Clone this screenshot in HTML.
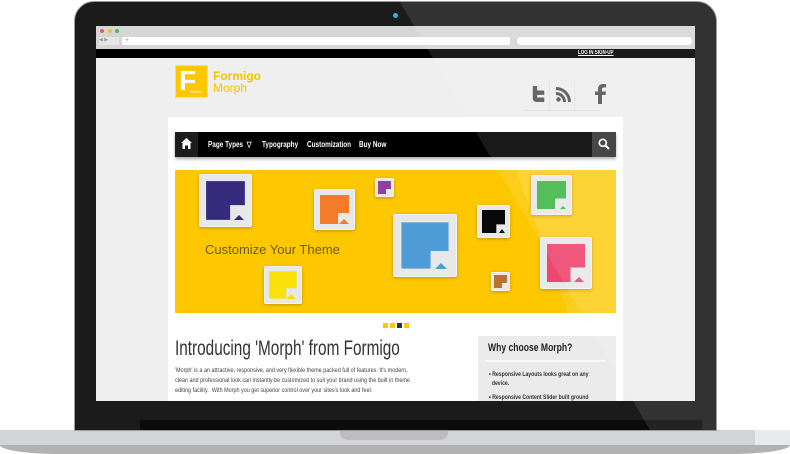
<!DOCTYPE html>
<html><head><meta charset="utf-8"><style>
*{margin:0;padding:0;box-sizing:border-box}
body{width:790px;height:454px;background:#fff;position:relative;overflow:hidden;font-family:"Liberation Sans",sans-serif}
.a{position:absolute}
.sq{transform-origin:0 0;white-space:nowrap}
.tile{position:absolute;background:#e8e8e8;border:1px solid #f4f4f4;box-shadow:0 1px 3px rgba(0,0,0,.25);border-radius:2px}
.tile i{position:absolute;left:12%;top:12%;width:76%;height:76%;display:block;clip-path:polygon(0 0,100% 0,100% 62%,62% 62%,62% 100%,0 100%)}
.tile b{position:absolute;right:14%;bottom:12%;width:0;height:0;border-left:5px solid transparent;border-right:5px solid transparent;border-bottom:5px solid}
.nav span{position:absolute;top:0;transform-origin:0 0;transform:scaleX(.8);white-space:nowrap}
</style></head><body>
<div class="a" style="left:0;top:430px;width:790px;height:16px;background:#d3d4d6"></div>
<div class="a" style="left:755px;top:430px;width:35px;height:16px;background:#e8eaee"></div>
<div class="a" style="left:0;top:445px;width:790px;height:9px;background:#b2b2b3;border-radius:0 0 60px 60px/0 0 9px 9px"></div>
<div class="a" style="left:340px;top:430px;width:108px;height:10px;background:#bdbdbf;border-radius:0 0 8px 8px"></div>
<div class="a" style="left:74px;top:1px;width:643px;height:430px;background:#1b1b1b;border:1px solid #9a9a9a;border-radius:20px 20px 0 0"></div>
<div class="a" style="left:140px;top:420px;width:562px;height:10px;background:#0b0b0b"></div>
<div class="a" style="left:393px;top:13px;width:5px;height:5px;border-radius:50%;background:#2ab8e6"></div>
<div class="a" style="left:96px;top:26px;width:599px;height:375px;background:#efefef;overflow:hidden">
 <div class="a" style="left:0;top:0;width:599px;height:23px;background:#d6d6d6"></div>
 <div class="a" style="left:4px;top:3px;width:4px;height:4px;border-radius:50%;background:#ec5f58"></div>
 <div class="a" style="left:12px;top:3px;width:4px;height:4px;border-radius:50%;background:#f2bb3c"></div>
 <div class="a" style="left:19px;top:3px;width:4px;height:4px;border-radius:50%;background:#3fc34e"></div>
 <div class="a" style="left:3px;top:11px;width:20px;height:8px;background:#e6e6e6;font-size:5px;color:#999">◀ ▶</div>
 <div class="a" style="left:26px;top:11px;width:388px;height:8px;background:#fff;border-radius:2px;font-size:7px;line-height:8px;color:#999;padding-left:3px">+</div>
 <div class="a" style="left:421px;top:11px;width:175px;height:8px;background:#fff;border-radius:4px"></div>
 <div class="a" style="left:0;top:23px;width:599px;height:9px;background:#000"></div>
 <div class="a sq" style="left:482px;top:23px;font-size:6px;line-height:9px;color:#fff;font-weight:bold;text-decoration:underline;transform:scaleX(.75)">LOG IN SIGN-UP</div>
 <div class="a" style="left:79px;top:39px;width:33px;height:33px;background:#fdc800;border:1px solid #fde070"></div>
 <div class="a" style="left:83px;top:40px;font-size:28px;font-weight:bold;color:#fff;line-height:30px">F</div>
 <div class="a" style="left:93px;top:63px;font-size:4px;color:#fff">Theme</div>
 <div class="a" style="left:117px;top:44px;font-size:12px;font-weight:bold;color:#f5c200;line-height:12px">Formigo</div>
 <div class="a" style="left:117px;top:56px;font-size:12px;color:#f5c200;line-height:12px">Morph</div>
 <div class="a" style="left:428px;top:53px;width:75px;height:32px;border-bottom:1px solid #e4e4e4"></div>
 <div class="a" style="left:453px;top:53px;width:1px;height:32px;background:#e4e4e4"></div>
 <div class="a" style="left:478px;top:53px;width:1px;height:32px;background:#e4e4e4"></div>
 <svg class="a" style="left:435px;top:59px" width="15" height="18" viewBox="0 0 17 18"><path d="M2 0h5v5h8v5H7v3h8v5H6a4 4 0 0 1-4-4z" fill="#555"/></svg>
 <svg class="a" style="left:460px;top:61px" width="15" height="15" viewBox="0 0 15 15"><circle cx="2.5" cy="12.5" r="2.2" fill="#555"/><path d="M0 5a10 10 0 0 1 10 10h-3A7 7 0 0 0 0 8zM0 0a15 15 0 0 1 15 15h-3A12 12 0 0 0 0 3z" fill="#555"/></svg>
 <svg class="a" style="left:499px;top:58px" width="11" height="20" viewBox="0 0 11 20"><path d="M3 20V11H0V7.5h3V5c0-3 2-5 5-5h3v3.5H8.5C7.5 3.5 7 4 7 5v2.5h4L10.5 11H7v9z" fill="#555"/></svg>
 <div class="a" style="left:72px;top:91px;width:455px;height:300px;background:#fff"></div>
 <div class="a" style="left:79px;top:106px;width:441px;height:25px;background:#000;box-shadow:0 2px 3px rgba(0,0,0,.35)"></div>
 <div class="a" style="left:79px;top:106px;width:23px;height:25px;background:#1c1c1c"></div>
 <svg class="a" style="left:85px;top:112px" width="11" height="11" viewBox="0 0 11 11"><path d="M5.5 0L11 5H9.5v6H7V7.5H4V11H1.5V5H0z" fill="#fff"/></svg>
 <div class="a" style="left:496px;top:106px;width:24px;height:25px;background:#333"></div>
 <svg class="a" style="left:502px;top:112px" width="12" height="12" viewBox="0 0 12 12"><circle cx="4.8" cy="4.8" r="3.5" stroke="#fff" stroke-width="1.7" fill="none"/><path d="M7.5 7.5L11 11" stroke="#fff" stroke-width="2"/></svg>
 <div class="a nav" style="left:0;top:106px;width:599px;height:25px;line-height:25px;font-size:8px;font-weight:bold;color:#fff">
  <span style="left:112px">Page Types &nbsp;▽</span><span style="left:166px">Typography</span><span style="left:211px">Customization</span><span style="left:263px">Buy Now</span>
 </div>
 <div class="a" style="left:79px;top:144px;width:441px;height:143px;background:#fec800;overflow:hidden">
  <div class="a" style="left:370px;top:0;width:120px;height:160px;background:rgba(255,255,255,.12);transform:skewX(20deg)"></div>
  <div class="a" style="left:30px;top:72px;font-size:13px;color:#6e5a1e">Customize Your Theme</div>
 </div>
 <div class="tile" style="left:103px;top:148px;width:53px;height:53px"><i style="background:#352a7b"></i><b style="border-bottom-color:#352a7b"></b></div>
 <div class="tile" style="left:218px;top:163px;width:41px;height:41px"><i style="background:#f47b29"></i><b style="border-bottom-color:#f47b29"></b></div>
 <div class="tile" style="left:279px;top:152px;width:19px;height:19px"><i style="background:#903fa0"></i></div>
 <div class="tile" style="left:297px;top:188px;width:64px;height:63px"><i style="background:#4f9bd5"></i><b style="border-bottom-color:#4f9bd5;border-width:0 6px 6px"></b></div>
 <div class="tile" style="left:381px;top:179px;width:33px;height:33px"><i style="background:#08090b"></i><b style="border-bottom-color:#111;border-width:0 3px 4px"></b></div>
 <div class="tile" style="left:435px;top:149px;width:41px;height:40px"><i style="background:#41b74a"></i><b style="border-bottom-color:#41b74a;border-width:0 3px 3px"></b></div>
 <div class="tile" style="left:444px;top:211px;width:52px;height:52px"><i style="background:#ef466d"></i><b style="border-bottom-color:#ef466d"></b></div>
 <div class="tile" style="left:168px;top:240px;width:38px;height:38px"><i style="background:#fbe10a"></i><b style="border-bottom-color:#fbe10a"></b></div>
 <div class="tile" style="left:395px;top:246px;width:19px;height:19px"><i style="background:#b8732f"></i></div>
 <div class="a" style="left:287px;top:297px;width:5px;height:5px;background:#fdc800"></div>
 <div class="a" style="left:294px;top:297px;width:5px;height:5px;background:#fdc800"></div>
 <div class="a" style="left:301px;top:297px;width:5px;height:5px;background:#333"></div>
 <div class="a" style="left:308px;top:297px;width:5px;height:5px;background:#fdc800"></div>
 <div class="a sq" style="left:79px;top:311px;font-size:21px;color:#333;transform:scaleX(.73)">Introducing 'Morph' from Formigo</div>
 <div class="a sq" style="left:79px;top:340px;font-size:6.4px;line-height:10px;color:#444;transform:scaleX(.85)">'Morph' is a an attractive, responsive, and very flexible theme packed full of features. It's modern,<br>clean and professional look can instantly be customized to suit your brand using the built in theme<br>editing facility.&nbsp; With Morph you get superior control over your sites's look and feel.</div>
 <div class="a" style="left:382px;top:310px;width:138px;height:70px;background:#ebebeb"></div>
 <div class="a sq" style="left:392px;top:316px;font-size:11px;font-weight:bold;color:#222;transform:scaleX(.78)">Why choose Morph?</div>
 <div class="a" style="left:389px;top:334px;width:120px;height:2px;background:#f8f8f8"></div>
 <div class="a sq" style="left:393px;top:344px;font-size:6.4px;line-height:9px;color:#333;font-weight:bold;transform:scaleX(.8)">• Responsive Layouts looks great on any<br>&nbsp;&nbsp;device.<br><div style="height:5px"></div>• Responsive Content Slider built ground</div>
</div>
<div class="a" style="left:0;top:0;width:790px;height:430px;clip-path:polygon(400px 2px,716px 2px,716px 430px,650px 430px);background:rgba(255,255,255,.1)"></div>
</body></html>
